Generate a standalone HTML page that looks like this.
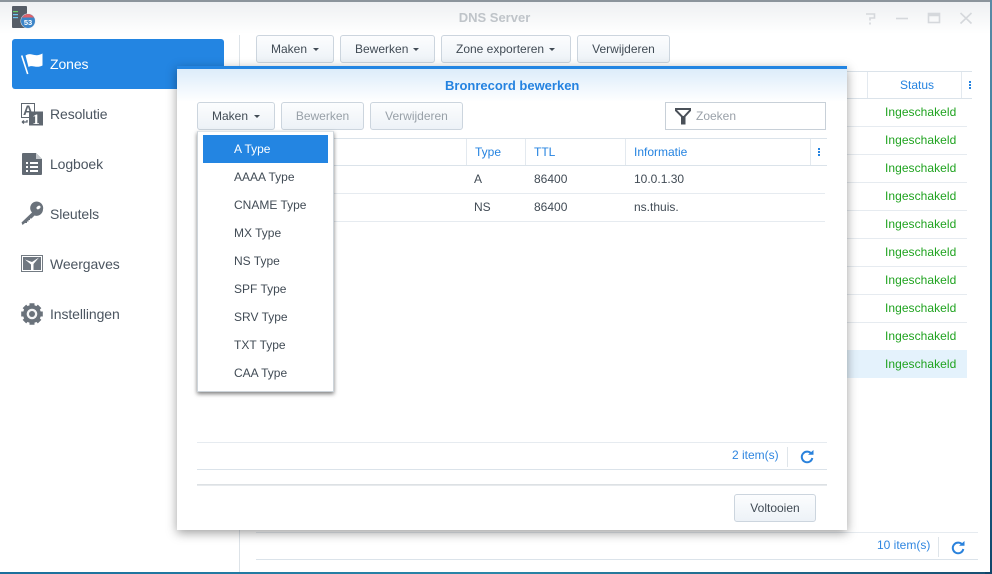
<!DOCTYPE html>
<html><head><meta charset="utf-8">
<style>
*{box-sizing:border-box}
html,body{margin:0;padding:0;width:992px;height:574px;overflow:hidden;background:#1d6f96;font-family:"Liberation Sans",sans-serif;font-size:12px;color:#414b55}
div,span{position:absolute;white-space:nowrap}
svg{position:absolute;overflow:visible}
#bgr{left:0;top:0;width:992px;height:574px;background:linear-gradient(90deg,#1b6f9c,#2a86a8 50%,#174f72)}
#bgs{left:985px;top:0;width:7px;height:574px;background:linear-gradient(#5a8aa5,#1e7aa0 60%,#11456a)}
#win{left:0;top:0;width:990px;height:572px;background:#fff;overflow:hidden}
#topline{left:0;top:0;width:990px;height:2px;background:#8b949b}
#hdr{left:0;top:2px;width:990px;height:32px;background:linear-gradient(#eef0f2,#fff)}
.title{left:0;width:989px;text-align:center;top:10px;font-weight:bold;color:#bfc4c9;font-size:13px}
#sel{left:12px;top:39px;width:212px;height:50px;background:#2385e2;border-radius:3px}
.nav{left:50px;font-size:14px;color:#4b5560;letter-spacing:-.1px}
.vs{left:239px;top:35px;width:1px;height:537px;background:#dde3e8}
.btn{height:28px;border:1px solid #ccd5de;border-radius:3px;background:linear-gradient(#fcfdfe,#edf2f7);text-align:center;line-height:26px;color:#414b55}
.btn.d{color:#98a0a8}
.car{width:0;height:0;border-left:3.5px solid transparent;border-right:3.5px solid transparent;border-top:3.5px solid #414b55;top:12px}
.st{left:885px;color:#1fa31f;letter-spacing:.05px}
.hl{height:1px;background:#e6ebf0}
.hb{height:1px;background:#dbe3ea}
.th{color:#2583e0}
.dot{width:2px;height:2px;background:#2583e0}
#dlg{left:177px;top:66px;width:670px;height:464px;background:#fff;border-top:3px solid #2385e2;box-shadow:0 3px 10px rgba(0,0,0,.38)}
#dgrad{left:0;top:0;width:670px;height:33px;background:linear-gradient(#dcecfa,#fff)}
#menu{left:20px;top:62px;width:137px;height:261px;background:#fff;border:1px solid #cdd4da;border-top-color:#dfe4e8;box-shadow:0 2px 4px rgba(0,0,0,.5)}
.mi{left:36px;color:#414b55}
</style></head><body>
<div id="bgr"></div><div id="bgs"></div>
<div id="win">
<div id="hdr"></div><div id="topline"></div>
<div class="title">DNS Server</div>

<svg style="left:12px;top:6px" width="24" height="24" viewBox="0 0 24 24">
<rect x="0" y="0" width="15" height="22" rx="1" fill="#565d67"/>
<rect x="1" y="5" width="5" height="1.2" fill="#6fd06f"/><rect x="1" y="8" width="5" height="1.2" fill="#6fc6ee"/><rect x="1" y="11" width="5" height="1.2" fill="#6fc6ee"/>
<circle cx="16" cy="15" r="7.500" fill="#e4e9ee"/>
<circle cx="16" cy="15" r="7" fill="#3d85c8"/>
<path d="M9.940 11.500A7 7 0 0 1 22.060 11.500z" fill="#e0626a"/>
<text x="16" y="18.800" text-anchor="middle" font-size="7.500" font-weight="bold" fill="#fff" font-family="Liberation Sans">53</text>
</svg>
<svg style="left:865px;top:11px" width="110" height="16" viewBox="0 0 110 16" fill="none" stroke="#d5d8dc" stroke-width="1.600">
<path d="M1 3h8.500v4h-4.500v2.500M5 11.500v2"/>
<path d="M31 7.500h12"/>
<rect x="63.500" y="2.500" width="11" height="9"/><path d="M63.500 4h11" stroke-width="2.500"/>
<path d="M95.500 2l11 10.500M106.500 2l-11 10.500"/>
</svg>

<div id="sel"></div>
<svg style="left:21px;top:52px" width="23" height="24" viewBox="0 0 23 24">
<path d="M0.700 3.500l6 18.500" stroke="#fff" stroke-width="1.600" fill="none"/>
<path d="M4.500 3.500c4-2.500 6-1 9 -.5 3 .5 5 0 8-1.500v12c-3 1.500-5.500 1.500-8 1-3-.5-4.500-.5-6 .5z" fill="#fff"/>
</svg>
<span class="nav" style="top:56px;color:#fff">Zones</span>
<svg style="left:21px;top:103px" width="23" height="23" viewBox="0 0 23 23">
<rect x="0.500" y="0.500" width="13" height="14" fill="#fff" stroke="#5f6770"/>
<text x="7" y="12" text-anchor="middle" font-size="14" font-weight="bold" fill="#5f6770" font-family="Liberation Sans">A</text>
<rect x="8" y="8.500" width="14" height="14" fill="#5f6770"/>
<text x="15" y="21" text-anchor="middle" font-size="15" font-weight="bold" fill="#fff" font-family="Liberation Serif">1</text>
<path d="M1 19h5v-2M1 19l2-1.500M1 19l2 1.500" stroke="#5f6770" stroke-width="1.300" fill="none"/>
</svg>
<span class="nav" style="top:106px">Resolutie</span>
<svg style="left:22px;top:153px" width="20" height="22" viewBox="0 0 20 22">
<path d="M1 0h13l6 6v15a1 1 0 0 1-1 1H1a1 1 0 0 1-1-1V1a1 1 0 0 1 1-1z" fill="#626a73"/>
<path d="M14 0l6 6h-6z" fill="#c5c9cd"/>
<path d="M4 9h2v2H4zM8 9h8v2H8zM4 13h2v2H4zM8 13h8v2H8zM4 17h2v2H4zM8 17h8v2H8z" fill="#fff"/>
</svg>
<span class="nav" style="top:156px">Logboek</span>
<svg style="left:21px;top:203px" width="23" height="23" viewBox="0 0 23 23">
<path d="M22 6.500a6.500 6.500 0 0 1-8.500 6L10.500 15.500H9v1.500H7.500v1.500H6v1.500H4L1.500 22 0.500 19.500l10.500-10A6.500 6.500 0 1 1 22 6.500z" fill="#6a727b"/>
<ellipse cx="17.500" cy="4.500" rx="2.200" ry="1.500" transform="rotate(-35 17.500 4.500)" fill="#fff"/>
</svg>
<span class="nav" style="top:206px">Sleutels</span>
<svg style="left:21px;top:255px" width="22" height="18" viewBox="0 0 22 18">
<rect x="0.500" y="0.500" width="21" height="16" fill="#fff" stroke="#737b83"/>
<rect x="2" y="2" width="18" height="13" fill="#6f7780"/>
<path d="M4 4.500l6 5v5.500h2.500V9l5.500-6.500-7 4.500z" fill="#fff"/>
</svg>
<span class="nav" style="top:256px">Weergaves</span>
<svg style="left:21px;top:303px" width="22" height="22" viewBox="0 0 22 22">
<circle cx="11" cy="11" r="9" fill="#6a727b"/>
<path d="M11 0.200v21.600M0.200 11h21.600M3.400 3.400l15.200 15.200M18.600 3.400L3.400 18.600" stroke="#6a727b" stroke-width="5"/>
<circle cx="11" cy="11" r="5.300" fill="#f4f5f6"/><circle cx="11" cy="11" r="3" fill="#6a727b"/>
</svg>
<span class="nav" style="top:306px">Instellingen</span>

<div class="vs"></div>

<div class="btn" style="left:256px;top:35px;width:78px"><span style="left:14px;top:0">Maken</span><span class="car" style="left:56px"></span></div>
<div class="btn" style="left:340px;top:35px;width:95px"><span style="left:14px;top:0">Bewerken</span><span class="car" style="left:72px"></span></div>
<div class="btn" style="left:441px;top:35px;width:130px"><span style="left:14px;top:0">Zone exporteren</span><span class="car" style="left:107px"></span></div>
<div class="btn" style="left:577px;top:35px;width:93px">Verwijderen</div>

<div class="hb" style="left:847px;top:71px;width:125px"></div>
<div class="hb" style="left:847px;top:98px;width:125px"></div>
<div style="left:867px;top:72px;width:1px;height:26px;background:#e3e9ef"></div>
<div style="left:961px;top:72px;width:1px;height:26px;background:#e3e9ef"></div>
<span class="th" style="left:900px;top:78px">Status</span>
<div class="dot" style="left:969px;top:81px"></div><div class="dot" style="left:969px;top:84px"></div><div class="dot" style="left:969px;top:87px"></div>

<div class="hl" style="left:847px;top:126px;width:120px"></div>
<div class="hl" style="left:847px;top:154px;width:120px"></div>
<div class="hl" style="left:847px;top:182px;width:120px"></div>
<div class="hl" style="left:847px;top:210px;width:120px"></div>
<div class="hl" style="left:847px;top:238px;width:120px"></div>
<div class="hl" style="left:847px;top:266px;width:120px"></div>
<div class="hl" style="left:847px;top:294px;width:120px"></div>
<div class="hl" style="left:847px;top:322px;width:120px"></div>
<div class="hl" style="left:847px;top:350px;width:120px"></div>
<div style="left:847px;top:350px;width:120px;height:28px;background:#e4f2fc"></div>
<span class="st" style="top:105px">Ingeschakeld</span>
<span class="st" style="top:133px">Ingeschakeld</span>
<span class="st" style="top:161px">Ingeschakeld</span>
<span class="st" style="top:189px">Ingeschakeld</span>
<span class="st" style="top:217px">Ingeschakeld</span>
<span class="st" style="top:245px">Ingeschakeld</span>
<span class="st" style="top:273px">Ingeschakeld</span>
<span class="st" style="top:301px">Ingeschakeld</span>
<span class="st" style="top:329px">Ingeschakeld</span>
<span class="st" style="top:357px">Ingeschakeld</span>

<div class="hl" style="left:256px;top:532px;width:722px"></div>
<div class="hb" style="left:256px;top:559px;width:722px"></div>
<span class="th" style="left:877px;top:538px;color:#2f86e0">10 item(s)</span>
<div style="left:938px;top:537px;width:1px;height:20px;background:#dfe5ea"></div>
<svg style="left:951px;top:541px" width="14" height="14" viewBox="0 0 14 14"><path d="M11.500 4A5.300 5.300 0 1 0 12.300 8" fill="none" stroke="#2a82dc" stroke-width="2"/><path d="M8 4.800h5.500V0z" fill="#2a82dc"/></svg>

<div id="dlg">
<div id="dgrad"></div>
<span style="left:268px;top:9px;font-weight:bold;font-size:13px;color:#2583e0">Bronrecord bewerken</span>

<div class="btn" style="left:20px;top:33px;width:78px"><span style="left:14px;top:0">Maken</span><span class="car" style="left:56px"></span></div>
<div class="btn d" style="left:104px;top:33px;width:83px">Bewerken</div>
<div class="btn d" style="left:193px;top:33px;width:93px">Verwijderen</div>
<div style="left:488px;top:33px;width:161px;height:28px;border:1px solid #c8d0d8;background:#fff"></div>
<svg style="left:498px;top:39px" width="16" height="16" viewBox="0 0 16 16"><path d="M1 1h14v1.500L9.500 8.500V15.500H7V8.500L1 2.500z" fill="none" stroke="#4a5058" stroke-width="2"/><path d="M6.500 8h3.500v8H7z" fill="#4a5058"/></svg>
<span style="left:519px;top:40px;color:#9aa1a9">Zoeken</span>

<div class="hb" style="left:20px;top:69px;width:630px"></div>
<div class="hb" style="left:20px;top:96px;width:630px"></div>
<div style="left:289px;top:70px;width:1px;height:26px;background:#e3e9ef"></div>
<div style="left:348px;top:70px;width:1px;height:26px;background:#e3e9ef"></div>
<div style="left:448px;top:70px;width:1px;height:26px;background:#e3e9ef"></div>
<div style="left:633px;top:70px;width:1px;height:26px;background:#e3e9ef"></div>
<span class="th" style="left:298px;top:76px">Type</span>
<span class="th" style="left:357px;top:76px">TTL</span>
<span class="th" style="left:457px;top:76px">Informatie</span>
<div class="dot" style="left:641px;top:79px"></div><div class="dot" style="left:641px;top:82px"></div><div class="dot" style="left:641px;top:85px"></div>
<span style="left:297px;top:103px">A</span><span style="left:357px;top:103px">86400</span><span style="left:457px;top:103px">10.0.1.30</span>
<div class="hl" style="left:20px;top:124px;width:628px"></div>
<span style="left:297px;top:131px">NS</span><span style="left:357px;top:131px">86400</span><span style="left:457px;top:131px">ns.thuis.</span>
<div class="hl" style="left:20px;top:152px;width:628px"></div>

<div class="hl" style="left:20px;top:373px;width:630px"></div>
<div class="hb" style="left:20px;top:400px;width:630px"></div>
<span style="left:555px;top:379px;color:#2f86e0">2 item(s)</span>
<div style="left:610px;top:378px;width:1px;height:20px;background:#dfe5ea"></div>
<svg style="left:623px;top:381px" width="14" height="14" viewBox="0 0 14 14"><path d="M11.500 4A5.300 5.300 0 1 0 12.300 8" fill="none" stroke="#2a82dc" stroke-width="2"/><path d="M8 4.800h5.500V0z" fill="#2a82dc"/></svg>
<div style="left:20px;top:415px;width:630px;height:2px;background:linear-gradient(#d8dcdf,#eceff1)"></div>
<div class="btn" style="left:557px;top:425px;width:82px">Voltooien</div>

<div id="menu">
<div style="left:5px;top:3px;width:125px;height:28px;background:#2385e2"></div>
<span class="mi" style="top:10px;color:#fff">A Type</span>
<span class="mi" style="top:38px">AAAA Type</span>
<span class="mi" style="top:66px">CNAME Type</span>
<span class="mi" style="top:94px">MX Type</span>
<span class="mi" style="top:122px">NS Type</span>
<span class="mi" style="top:150px">SPF Type</span>
<span class="mi" style="top:178px">SRV Type</span>
<span class="mi" style="top:206px">TXT Type</span>
<span class="mi" style="top:234px">CAA Type</span>
</div>
</div>
</div>
</body></html>
